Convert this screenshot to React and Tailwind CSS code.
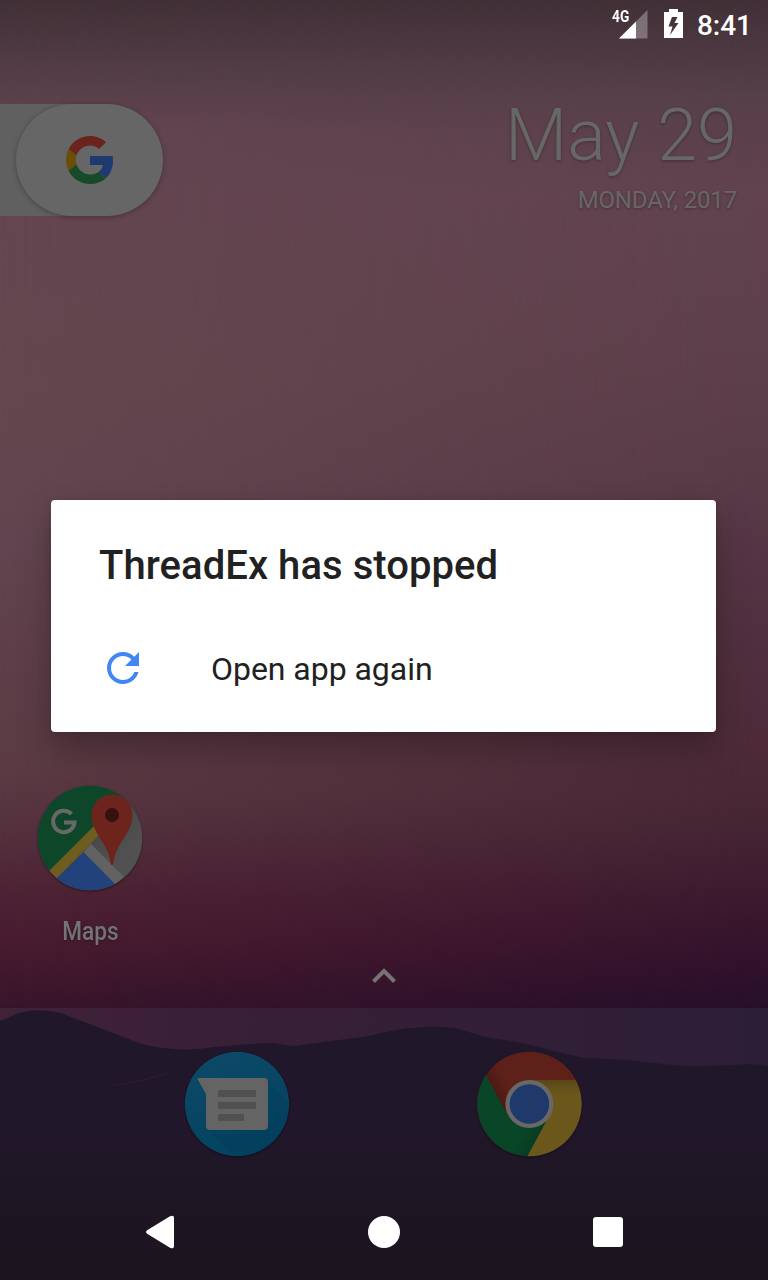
import React from "react";

const G_PATHS = {
  blue: "M46.98 24.55c0-1.57-.15-3.09-.38-4.55H24v9.02h12.94c-.58 2.96-2.26 5.48-4.78 7.18l7.73 6c4.51-4.18 7.09-10.36 7.09-17.65z",
  red: "M24 9.5c3.54 0 6.71 1.22 9.21 3.6l6.85-6.85C35.9 2.38 30.47 0 24 0 14.62 0 6.51 5.38 2.56 13.22l7.98 6.19C12.43 13.72 17.74 9.5 24 9.5z",
};

function Wallpaper() {
  return (
    <svg className="absolute inset-0 h-[1280px] w-[768px]" viewBox="0 0 768 1280" preserveAspectRatio="none">
      <defs>
        <linearGradient id="skyLeft" gradientUnits="userSpaceOnUse" x1="0" y1="0" x2="0" y2="1070">
          <stop offset="0" stopColor="#413037" />
          <stop offset=".06" stopColor="#523c45" />
          <stop offset=".12" stopColor="#634551" />
          <stop offset=".2" stopColor="#644651" />
          <stop offset=".36" stopColor="#64484e" />
          <stop offset=".5" stopColor="#624550" />
          <stop offset=".62" stopColor="#5e3f49" />
          <stop offset=".72" stopColor="#5c3b44" />
          <stop offset=".78" stopColor="#54303d" />
          <stop offset=".84" stopColor="#4d2234" />
          <stop offset=".88" stopColor="#491c2f" />
          <stop offset=".94" stopColor="#39152b" />
          <stop offset="1" stopColor="#2d112a" />
        </linearGradient>
        <linearGradient id="skyRight" gradientUnits="userSpaceOnUse" x1="0" y1="0" x2="0" y2="1070">
          <stop offset="0" stopColor="#413037" />
          <stop offset=".09" stopColor="#563f49" />
          <stop offset=".18" stopColor="#61424f" />
          <stop offset=".32" stopColor="#5e3f4c" />
          <stop offset=".46" stopColor="#583947" />
          <stop offset=".6" stopColor="#502f3e" />
          <stop offset=".7" stopColor="#4e2a39" />
          <stop offset=".77" stopColor="#462533" />
          <stop offset=".83" stopColor="#3e1b2f" />
          <stop offset=".89" stopColor="#34122c" />
          <stop offset=".94" stopColor="#270f2a" />
          <stop offset="1" stopColor="#1d1030" />
        </linearGradient>
        <linearGradient id="fade" x1="0" y1="0" x2="1" y2="0">
          <stop offset="0" stopColor="#fff" stopOpacity="0" />
          <stop offset="1" stopColor="#fff" />
        </linearGradient>
        <mask id="rightMask">
          <rect width="768" height="1280" fill="url(#fade)" />
        </mask>
        <linearGradient id="hill" gradientUnits="userSpaceOnUse" x1="0" y1="1008" x2="0" y2="1280">
          <stop offset="0" stopColor="#21172a" />
          <stop offset=".45" stopColor="#21172a" />
          <stop offset=".75" stopColor="#1d1522" />
          <stop offset="1" stopColor="#1c151f" />
        </linearGradient>
        <linearGradient id="hotseat" x1="0" y1="0" x2="1" y2="0">
          <stop offset="0" stopColor="#402238" />
          <stop offset=".35" stopColor="#371f37" />
          <stop offset="1" stopColor="#2d1e37" />
        </linearGradient>
      </defs>
      <rect width="768" height="1280" fill="url(#skyLeft)" />
      <rect width="768" height="1280" fill="url(#skyRight)" mask="url(#rightMask)" />
      <rect y="1008" width="768" height="272" fill="url(#hotseat)" />
      <path
        d="M0 1021C10 1017 17 1013 25 1011.500C38 1009 53 1011 64 1014C80 1021 94 1025 108 1031C126 1038 142 1045 157 1047C170 1049 184 1050 198 1049C223 1046 248 1043 274 1043Q286 1045 294 1046Q330 1041 362 1037C380 1034 395 1029 411 1028Q435 1025 455 1028C467 1031 478 1035 490 1038Q516 1041 539 1047Q566 1055 588 1058Q615 1059 637 1061Q662 1064 686 1066Q720 1066 744 1064Q757 1064 768 1066V1280H0Z"
        fill="url(#hill)"
      />
      <path d="M90 1089Q144 1081 180 1069Q150 1082 90 1089Z" fill="#30213a" opacity=".7" />
    </svg>
  );
}

function StatusBar() {
  return (
    <header className="flex h-12 items-start justify-end pr-4 text-white">
      <div className="relative mt-[9px] h-[30px] w-[36px]">
        <svg className="h-[30px] w-[36px]" viewBox="0 0 36 30">
          <path d="M7 29.500L35.500 1V29.500Z" fill="#fff" opacity=".3" />
          <path d="M7 29.500L24 12.500V29.500Z" fill="#fff" />
        </svg>
        <span className="absolute left-0 top-0 origin-left scale-x-[.86] text-[16px] font-bold leading-[16px]">4G</span>
      </div>
      <svg className="ml-4 mt-[9px] h-[30px] w-[19px]" viewBox="0 0 19 30">
        <path fillRule="evenodd" fill="#fff" d="M5 0H14V3H19V29H0V3H5ZM8 8L4.500 17.500H8.500L6 26L14.500 14H10.500L13.500 8Z" />
      </svg>
      <time className="ml-[14px] mt-[9px] text-[28px] font-medium leading-[33px]">8:41</time>
    </header>
  );
}

function GoogleG({ className }) {
  return (
    <svg className={className} viewBox="0 0 48 48">
      <path fill="#6a241d" d={G_PATHS.red} />
      <path fill="#1e3a70" d={G_PATHS.blue} />
      <path fill="#6b4f04" d="M10.530 28.590c-.48-1.450-.76-2.990-.76-4.590s.27-3.140.76-4.590l-7.980-6.190C.92 16.460 0 20.120 0 24c0 3.880.92 7.540 2.560 10.780l7.970-6.190z" />
      <path fill="#174a26" d="M24 48c6.480 0 11.930-2.130 15.890-5.810l-7.730-6c-2.150 1.450-4.920 2.300-8.160 2.300-6.260 0-11.570-4.220-13.470-9.910l-7.980 6.190C6.510 42.620 14.620 48 24 48z" />
    </svg>
  );
}

function HomeTop() {
  return (
    <section className="flex h-[170px] items-start justify-between pt-14">
      <div className="flex h-[112px] w-[163px] overflow-visible bg-[linear-gradient(#606060,#606060)] bg-[length:90px_112px] bg-no-repeat pl-4">
        <div className="flex h-[112px] w-[147px] items-center justify-center rounded-full bg-[#666] shadow-[0_1px_5px_rgba(0,0,0,.3)]">
          <GoogleG className="h-12 w-12" />
        </div>
      </div>
      <div className="flex flex-col items-end pr-[31px] text-[#676767] [text-shadow:0_1px_3px_rgba(0,0,0,.3)]">
        <div className="-mt-[10px] text-[72px] font-light leading-[84px]">May 29</div>
        <div className="mt-2 text-[24px] leading-7 tracking-[-.16px]">MONDAY, 2017</div>
      </div>
    </section>
  );
}

function MapsIcon() {
  return (
    <svg className="h-[106px] w-[106px] drop-shadow-[0_1px_1px_rgba(0,0,0,.4)]" viewBox="0 0 106 106">
      <defs>
        <clipPath id="mapCircle"><circle cx="53" cy="53" r="52.300" /></clipPath>
        <linearGradient id="mapGrey" x1="0" y1="0" x2="1" y2="1">
          <stop offset=".4" stopColor="#444" />
          <stop offset=".75" stopColor="#515151" />
        </linearGradient>
      </defs>
      <g clipPath="url(#mapCircle)">
        <rect width="106" height="106" fill="url(#mapGrey)" />
        <path d="M-10 -10H95V5L14 87L0 100Z" fill="#0e462a" />
        <path d="M58 40L65 47L20 93L12 86Z" fill="#6f5c1f" />
        <path d="M47 67L80 100V112H5L20 93Z" fill="#22427c" />
        <path d="M46.500 67L54 59L87 92L78 99Z" fill="#626262" />
        <path d="M75 80Q73.500 80 73.500 77C71 58 54.500 48 54.500 30A20.500 20.500 0 0 1 95.500 30C95.500 48 79 58 76.500 77Q76.500 80 75 80Z" fill="#6c241d" />
        <circle cx="75" cy="30" r="7" fill="#36110f" />
      </g>
      <path d="M34.500 29A10.700 10.700 0 1 0 37.500 37.500H27" fill="none" stroke="#686868" strokeWidth="4" />
    </svg>
  );
}

function MessagesIcon() {
  return (
    <svg className="h-[106px] w-[106px] drop-shadow-[0_1px_1px_rgba(0,0,0,.4)]" viewBox="0 0 106 106">
      <defs>
        <linearGradient id="msgBlue" x1=".2" y1="0" x2=".6" y2="1">
          <stop offset="0" stopColor="#0c4a67" />
          <stop offset="1" stopColor="#034260" />
        </linearGradient>
        <clipPath id="msgCircle"><circle cx="53" cy="53" r="52.200" /></clipPath>
      </defs>
      <g clipPath="url(#msgCircle)">
        <circle cx="53" cy="53" r="52.200" fill="url(#msgBlue)" />
        <path d="M83 29L113 59V113H57L23 77Z" fill="#023a57" opacity=".3" />
      </g>
      <path d="M15 27H80Q84 27 84 31V75Q84 79 80 79H26Q22 79 22 75V43L14 29Q13 27 15 27Z" fill="#646464" />
      <path d="M34 39H72V46H34ZM34 51H72V58H34ZM34 63H60V70H34Z" fill="#505050" />
    </svg>
  );
}

function ChromeIcon() {
  return (
    <svg className="h-[106px] w-[106px] drop-shadow-[0_1px_1px_rgba(0,0,0,.4)]" viewBox="0 0 106 106">
      <defs>
        <clipPath id="chromeCircle"><circle cx="53.400" cy="53" r="52.200" /></clipPath>
        <linearGradient id="redShade" gradientUnits="userSpaceOnUse" x1="18" y1="46" x2="34" y2="38">
          <stop offset="0" stopColor="#4a1814" />
          <stop offset="1" stopColor="#5e211a" />
        </linearGradient>
        <linearGradient id="yellowShade" gradientUnits="userSpaceOnUse" x1="0" y1="29" x2="0" y2="44">
          <stop offset="0" stopColor="#5a4717" />
          <stop offset="1" stopColor="#6b561c" />
        </linearGradient>
        <linearGradient id="greenShade" gradientUnits="userSpaceOnUse" x1="65" y1="84" x2="50" y2="76">
          <stop offset="0" stopColor="#083b22" />
          <stop offset="1" stopColor="#094527" />
        </linearGradient>
      </defs>
      <g clipPath="url(#chromeCircle)">
        <rect width="106" height="106" fill="url(#redShade)" />
        <path d="M53 29H106V106H50L73 65Z" fill="url(#yellowShade)" />
        <path d="M9.500 23L32 65L53 77L73 65L51 106H0V8Z" fill="url(#greenShade)" />
      </g>
      <circle cx="53.400" cy="53" r="24" fill="#686868" />
      <circle cx="53.400" cy="53" r="19.800" fill="#20396b" />
    </svg>
  );
}

function CrashDialog() {
  return (
    <div
      role="dialog"
      className="absolute left-[51px] top-[500px] flex h-[232px] w-[665px] flex-col rounded-[4px] bg-white px-12 text-[#212121] shadow-[0_18px_34px_rgba(0,0,0,.26),0_1px_6px_rgba(0,0,0,.1)]"
    >
      <h1 className="mt-[42px] whitespace-nowrap text-[40px] font-medium leading-[47px] tracking-[.06px]">ThreadEx has stopped</h1>
      <button className="mt-[31px] flex h-24 items-center text-left text-[32px] tracking-[-.04px]">
        <svg className="h-12 w-12" viewBox="0 0 24 24" fill="#4285f4">
          <path d="M17.650 6.350C16.200 4.900 14.210 4 12 4c-4.420 0-7.990 3.580-7.990 8s3.570 8 7.990 8c3.730 0 6.840-2.550 7.730-6h-2.080c-.82 2.330-3.040 4-5.650 4-3.310 0-6-2.690-6-6s2.690-6 6-6c1.660 0 3.140.69 4.220 1.780L13 11h7V4l-2.350 2.350z" />
        </svg>
        <span className="ml-16 pt-0.5">Open app again</span>
      </button>
    </div>
  );
}

function NavBar() {
  return (
    <nav className="flex h-24 items-center justify-center gap-[176px]">
      <svg className="h-12 w-12" viewBox="0 0 48 48">
        <path d="M11.500 22L34 8.300Q38 6.500 38 10V38Q38 41.500 34 39.700L11.500 26Q8.500 24 11.500 22Z" fill="#fff" />
      </svg>
      <span className="mx-2 h-8 w-8 rounded-full bg-white" />
      <span className="mx-[9px] h-[30px] w-[30px] rounded-[3px] bg-white" />
    </nav>
  );
}

export default function App() {
  return (
    <main className="relative h-[1280px] w-[768px] overflow-hidden font-['Roboto',sans-serif]">
      <Wallpaper />
      <div className="relative flex h-full flex-col">
        <StatusBar />
        <HomeTop />
        <div className="flex flex-1 items-end pb-[10px] pl-[37px]">
          <div className="flex w-[106px] flex-col items-center">
            <MapsIcon />
            <span className="mt-[25px] scale-x-[.87] text-[26px] font-medium leading-[30px] text-[#747474] [text-shadow:0_1px_3px_rgba(0,0,0,.4)]">Maps</span>
          </div>
        </div>
        <div className="flex h-[52px] items-start justify-center pt-[10px]">
          <svg className="h-6 w-6" viewBox="0 0 24 24">
            <path d="M1.500 15.500L12 5L22.500 15.500" fill="none" stroke="#757575" strokeWidth="4" />
          </svg>
        </div>
        <div className="flex h-[176px] items-start gap-[186px] pl-[184px] pt-[43px]">
          <MessagesIcon />
          <ChromeIcon />
        </div>
        <NavBar />
      </div>
      <CrashDialog />
    </main>
  );
}
